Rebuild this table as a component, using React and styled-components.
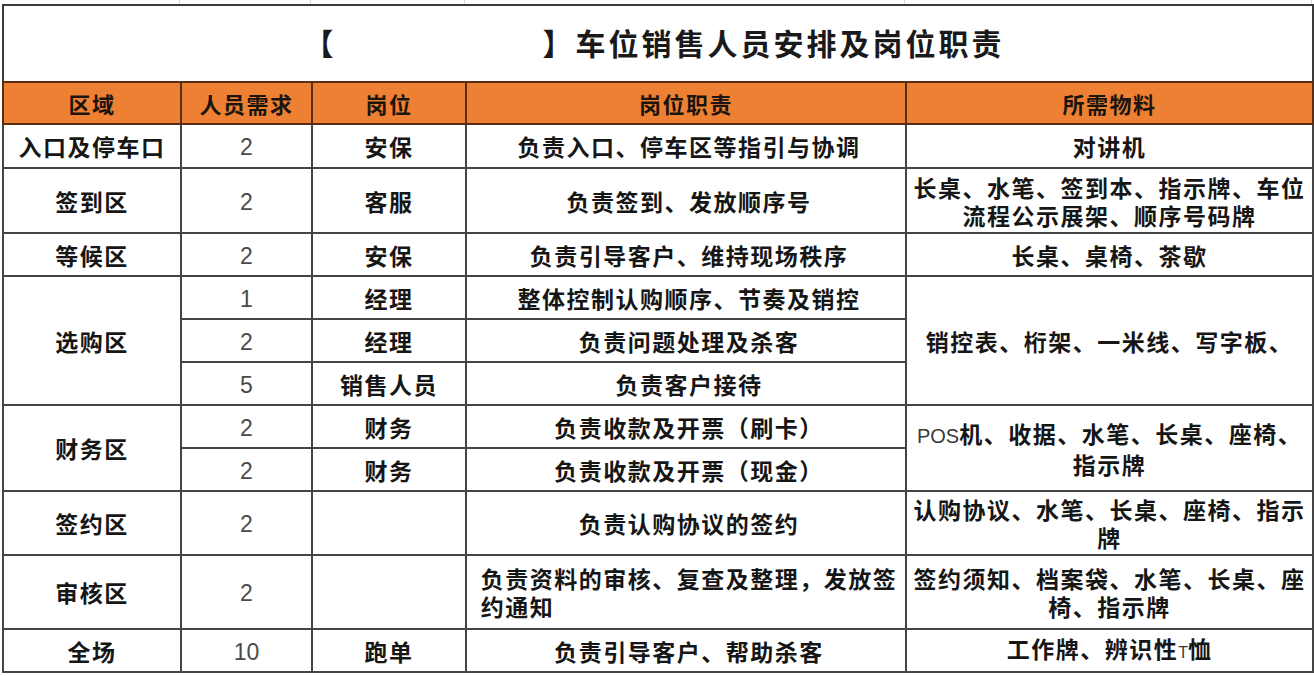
import React from "react";
import styled, { createGlobalStyle } from "styled-components";

const GlobalStyle = createGlobalStyle`
  html, body {
    margin: 0;
    padding: 0;
    background: #ffffff;
  }
  body {
    font-family: "Noto Sans CJK SC", "Noto Sans", sans-serif;
    color: #151515;
  }
`;

const columns = [178, 131, 154, 440, 407];

const rows = [
  { area: "入口及停车口", count: "2", post: "安保", duty: "负责入口、停车区等指引与协调", stuff: ["对讲机"], h: 44 },
  { area: "签到区", count: "2", post: "客服", duty: "负责签到、发放顺序号", stuff: ["长桌、水笔、签到本、指示牌、车位", "流程公示展架、顺序号码牌"], h: 65 },
  { area: "等候区", count: "2", post: "安保", duty: "负责引导客户、维持现场秩序", stuff: ["长桌、桌椅、茶歇"], h: 43 },
  { area: "选购区", span: 3, count: "1", post: "经理", duty: "整体控制认购顺序、节奏及销控", stuff: ["销控表、桁架、一米线、写字板、"], h: 43 },
  { count: "2", post: "经理", duty: "负责问题处理及杀客", h: 43 },
  { count: "5", post: "销售人员", duty: "负责客户接待", h: 43 },
  { area: "财务区", span: 2, count: "2", post: "财务", duty: "负责收款及开票（刷卡）", stuff: [["POS", "机、收据、水笔、长桌、座椅、"], "指示牌"], h: 43 },
  { count: "2", post: "财务", duty: "负责收款及开票（现金）", h: 43 },
  { area: "签约区", count: "2", post: "", duty: "负责认购协议的签约", stuff: ["认购协议、水笔、长桌、座椅、指示", "牌"], h: 64 },
  { area: "审核区", count: "2", post: "", duty: ["负责资料的审核、复查及整理，发放签", "约通知"], stuff: ["签约须知、档案袋、水笔、长桌、座", "椅、指示牌"], h: 74 },
  { area: "全场", count: "10", post: "跑单", duty: "负责引导客户、帮助杀客", stuff: [["", "工作牌、辨识性", "T", "恤"]], h: 43 },
];

export default function App() {
  const renderLines = (lines) =>
    lines.map((line, i) => {
      if (Array.isArray(line)) {
        return (
          <Line key={i}>
            {line[0] && <Latin>{line[0]}</Latin>}
            {line[1]}
            {line[2] && <Latin $small>{line[2]}</Latin>}
            {line[3]}
          </Line>
        );
      }
      return <Line key={i}>{line}</Line>;
    });

  return (
    <>
      <GlobalStyle />
      <Page>
        <GridStrip>
          {columns.map((w, i) => (
            <GridCell key={i} style={{ width: w }} />
          ))}
        </GridStrip>
        <Sheet>
          <colgroup>
            {columns.map((w, i) => (
              <col key={i} style={{ width: w }} />
            ))}
          </colgroup>
          <tbody>
            <TitleRow>
              <TitleCell colSpan={5}>
                【<Blank />】车位销售人员安排及岗位职责
              </TitleCell>
            </TitleRow>
            <HeadRow>
              <HeadCell>区域</HeadCell>
              <HeadCell>人员需求</HeadCell>
              <HeadCell>岗位</HeadCell>
              <HeadCell>岗位职责</HeadCell>
              <HeadCell>所需物料</HeadCell>
            </HeadRow>
            {rows.map((r, i) => (
              <Row key={i} $h={r.h}>
                {r.area && <Cell rowSpan={r.span || 1}>{r.area}</Cell>}
                <NumCell>{r.count}</NumCell>
                <Cell>{r.post}</Cell>
                <Cell $duty>
                  {Array.isArray(r.duty) ? <Left>{renderLines(r.duty)}</Left> : r.duty}
                </Cell>
                {r.stuff && (
                  <Cell rowSpan={r.span || 1}>
                    {renderLines(r.stuff)}
                  </Cell>
                )}
              </Row>
            ))}
          </tbody>
        </Sheet>
      </Page>
    </>
  );
}

const Page = styled.div`
  width: 1314px;
  height: 676px;
  overflow: hidden;
  padding-left: 2px;
  box-sizing: border-box;
`;

const GridStrip = styled.div`
  display: flex;
  height: 4px;
`;

const GridCell = styled.div`
  box-sizing: border-box;
  border-right: 1px solid #d8d8d8;
  flex: none;
`;

const Sheet = styled.table`
  border-collapse: collapse;
  table-layout: fixed;
  width: 1310px;
  border: 2px solid #3a3a3a;
`;

const TitleRow = styled.tr`
  height: 77px;
`;

const TitleCell = styled.td`
  text-align: center;
  font-size: 30px;
  font-weight: 700;
  letter-spacing: 3px;
  color: #1a1a1a;
  padding: 0 8px 4px 0;
  border-bottom: 2px solid #5a2e12;
`;

const Blank = styled.span`
  display: inline-block;
  width: 206px;
`;

const HeadRow = styled.tr`
  height: 42px;
  background: #ee8033;
`;

const HeadCell = styled.td`
  text-align: center;
  font-size: 22px;
  font-weight: 700;
  letter-spacing: 1.5px;
  color: #1c140e;
  border: 2px solid #5a2e12;
  padding: 0;
`;

const Row = styled.tr`
  height: ${(p) => p.$h}px;
`;

const Cell = styled.td`
  border: 2px solid #444444;
  text-align: center;
  vertical-align: middle;
  font-size: 23px;
  font-weight: 700;
  letter-spacing: 1.5px;
  line-height: 28px;
  padding: ${(p) => (p.$duty ? "0 4px 0 10px" : "0 2px")};
  color: #161616;
  white-space: nowrap;
`;

const NumCell = styled.td`
  border: 2px solid #444444;
  text-align: center;
  vertical-align: middle;
  font-family: "Liberation Sans", Arial, sans-serif;
  font-size: 23px;
  color: #4a4a4a;
  padding: 3px 0 0 0;
`;

const Left = styled.div`
  display: inline-block;
  text-align: left;
`;

const Line = styled.div`
  display: block;
`;

const Latin = styled.span`
  font-family: "Liberation Sans", Arial, sans-serif;
  font-weight: 400;
  font-size: ${(p) => (p.$small ? "16px" : "20px")};
  letter-spacing: 0;
  color: #3a3a3a;
`;
